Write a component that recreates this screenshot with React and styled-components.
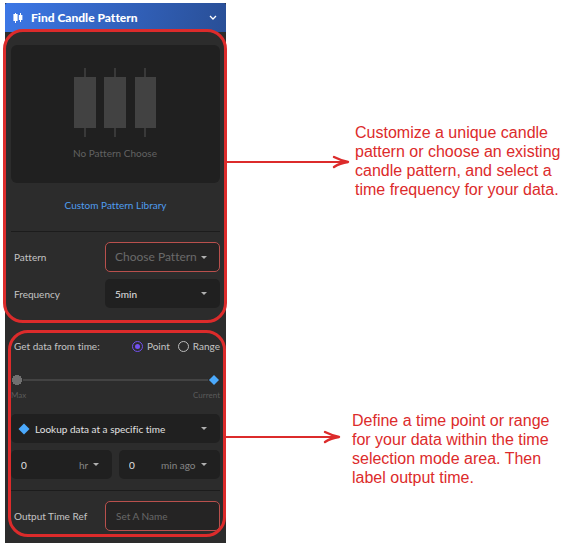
import React, { useState } from "react";
import styled, { createGlobalStyle } from "styled-components";

const GlobalStyle = createGlobalStyle`
  * { box-sizing: border-box; }
  body { margin: 0; background: #fff; font-family: Lato, sans-serif; font-variant-ligatures: none; }
  button, input, select { font: inherit; font-variant-ligatures: none; color: inherit; margin: 0; }
`;

const Page = styled.main`
  display: flex;
  align-items: flex-start;
  padding: 3px 5px 4px;
`;

const Panel = styled.form`
  flex: 0 0 221px;
  background: #2c2c2c;
  color: #c4c4c4;
  font-size: 10px;
  line-height: 14px;
`;

const Header = styled.button`
  display: flex;
  align-items: center;
  gap: 8px;
  width: 100%;
  height: 29px;
  padding: 0 9px 0 8px;
  border: 0;
  border-radius: 2px 2px 0 0;
  background: linear-gradient(100deg, #3c77e6, #294f97);
  color: #fff;
  font-size: 12px;
  font-weight: 900;
  text-align: left;
`;

const Title = styled.span`
  flex: 1;
`;

const Section = styled.section`
  position: relative;
  padding: ${(p) => p.$padding};
`;

const Highlight = styled.div`
  position: absolute;
  inset: ${(p) => p.$inset};
  border: 3px solid #dc2b2b;
  border-radius: 20px;
  pointer-events: none;
`;

const Preview = styled.div`
  display: flex;
  flex-direction: column;
  align-items: center;
  gap: 9px;
  height: 138px;
  padding-top: 23px;
  padding-right: 1px;
  border-radius: 6px;
  background: #202020;
  color: #626262;
`;

const LibraryLink = styled.a`
  display: block;
  margin: 15px 0 19px;
  color: #4f9df0;
  text-align: center;
  text-decoration: none;
`;

const Divider = styled.hr`
  height: 1px;
  margin: 0 0 10px;
  border: 0;
  background: #1c1c1c;
`;

const Row = styled.div`
  display: grid;
  grid-template-columns: 1fr 115px;
  align-items: center;
  padding-left: 3px;
  margin-bottom: ${(p) => p.$below || 0}px;
`;

const Field = styled.div`
  position: relative;
  display: flex;
  align-items: center;
  height: ${(p) => (p.$required ? 30 : 29)}px;
  border: ${(p) => (p.$required ? "1px solid #b9504d" : "0")};
  border-radius: 5px;
  background: ${(p) => (p.$required ? "#252424" : "#202020")};
  svg { pointer-events: none; }
`;

const Caret = styled.svg`
  position: absolute;
  right: ${(p) => p.$right || 13}px;
  width: 6px;
  height: 3px;
  fill: #b0b0b0;
`;

const Select = styled.select`
  appearance: none;
  width: 100%;
  height: 100%;
  padding: 0 20px 0 ${(p) => p.$left || 10}px;
  border: 0;
  outline: 0;
  background: transparent;
  color: ${(p) => (p.$muted ? "#6a6a6a" : "#e2e2e2")};
  font-size: ${(p) => p.$size || 10}px;
`;

const UnitSelect = styled(Select)`
  flex: none;
  width: ${(p) => p.$width}px;
  padding: 0;
  color: #858585;
`;

const TextInput = styled.input`
  flex: 1;
  min-width: 0;
  width: 100%;
  height: 100%;
  padding: 0 0 0 10px;
  border: 0;
  outline: 0;
  background: transparent;
  color: #e2e2e2;
  &::placeholder { color: #686868; opacity: 1; }
`;

const ModeRow = styled.fieldset`
  display: flex;
  align-items: center;
  gap: 8px;
  padding: 0 0 0 3px;
  margin: 0;
  border: 0;
`;

const ModeTitle = styled.span`
  flex: 1;
`;

const RadioLabel = styled.label`
  display: flex;
  align-items: center;
  gap: 4px;
`;

const Radio = styled.input`
  appearance: none;
  display: grid;
  place-items: center;
  width: 11px;
  height: 11px;
  border: 1px solid #bcbcbc;
  border-radius: 50%;
  &:checked {
    border-color: #7351ef;
  }
  &:checked::before {
    content: "";
    width: 5px;
    height: 5px;
    border-radius: 50%;
    background: #7351ef;
  }
`;

const Slider = styled.input`
  appearance: none;
  display: block;
  width: 100%;
  height: 12px;
  margin: 21px 0 3px;
  background:
    radial-gradient(circle at 6px 6px, #707070 0 5px, transparent 5px),
    linear-gradient(#434343, #434343) 12px 5px / calc(100% - 24px) 2px no-repeat;
  &::-webkit-slider-thumb {
    appearance: none;
    width: 12px;
    height: 12px;
    background: #4ba9fc;
    clip-path: polygon(50% 8%, 92% 50%, 50% 92%, 8% 50%);
  }
`;

const Scale = styled.div`
  display: flex;
  justify-content: space-between;
  color: #5b5b5b;
  font-size: 8px;
  line-height: 12px;
  margin-bottom: 13px;
`;

const Diamond = styled.svg`
  position: absolute;
  left: 7px;
  width: 12px;
  height: 12px;
  fill: #4ba9fc;
`;

const Offset = styled.div`
  display: grid;
  grid-template-columns: 1fr 1fr;
  gap: 7px;
  margin: 7px 0 11px;
`;

const Notes = styled.aside`
  flex: 1;
  display: flex;
  flex-direction: column;
  gap: 212px;
  padding-top: 120px;
  color: #dc2b2b;
  font: 16px/19px "Liberation Sans", Arial, sans-serif;
`;

const Note = styled.div`
  display: flex;
  align-items: flex-start;
  gap: ${(p) => p.$gap}px;
`;

const NoteText = styled.p`
  flex: 1;
  max-width: 212px;
  margin: 0;
`;

const ArrowSvg = styled.svg`
  flex: none;
  margin-top: ${(p) => p.$top}px;
  fill: none;
  stroke: currentColor;
  stroke-linecap: round;
  stroke-linejoin: round;
`;

const DownCaret = ({ right }) => (
  <Caret $right={right} viewBox="0 0 6 3" aria-hidden="true"><path d="M0 0h6L3 3z" /></Caret>
);

const HeaderCandles = () => (
  <svg width="10" height="12" viewBox="0 0 10 12" fill="#fff" aria-hidden="true">
    <path d="M2 1h1v1h1.6v7H3v2H2V9H.4V2H2zM7 1h1v2h1.4v5H8v2H7V8H5.8V3H7z" />
  </svg>
);

const Candles = () => (
  <svg width="82" height="69" viewBox="0 0 82 69" aria-hidden="true">
    <path d="M11 0v69M41 0v69M71 0v69" stroke="#393939" strokeWidth="2" />
    <path d="M0 9h22v51H0zM30 9h22v51H30zM61 9h21v51H61z" fill="#424242" />
  </svg>
);

const Arrow = ({ width, top }) => (
  <ArrowSvg $top={top} width={width} height="14" viewBox={`0 0 ${width} 14`} aria-hidden="true">
    <path d={`M0 7H${width - 3}`} strokeWidth="2" />
    <path d={`M${width - 16} 2Q${width - 10} 5 ${width - 2} 7Q${width - 10} 8 ${width - 16} 12`} strokeWidth="2.4" />
  </ArrowSvg>
);

export default function App() {
  const [mode, setMode] = useState("point");
  return (
    <>
      <GlobalStyle />
      <Page>
        <Panel>
          <Header type="button">
            <HeaderCandles />
            <Title>Find Candle Pattern</Title>
            <svg width="8" height="6" viewBox="0 0 8 6" fill="none" stroke="#fff" strokeWidth="1.3" aria-hidden="true">
              <path d="M1 1l3 3 3-3" />
            </svg>
          </Header>
          <Section $padding="13px 6px 18px">
            <Preview>
              <Candles />
              <span>No Pattern Choose</span>
            </Preview>
            <LibraryLink href="#library">Custom Pattern Library</LibraryLink>
            <Divider />
            <Row $below={7}>
              <label htmlFor="pattern">Pattern</label>
              <Field $required>
                <Select id="pattern" $muted $size={12} $left={9}><option>Choose Pattern</option></Select>
                <DownCaret right={12} />
              </Field>
            </Row>
            <Row>
              <label htmlFor="frequency">Frequency</label>
              <Field>
                <Select id="frequency"><option>5min</option></Select>
                <DownCaret />
              </Field>
            </Row>
            <Highlight $inset="-3px -1px 3px -2px" />
          </Section>
          <Section $padding="13px 6px 12px">
            <ModeRow aria-label="Get data from time">
              <ModeTitle>Get data from time:</ModeTitle>
              <RadioLabel>
                <Radio type="radio" name="mode" checked={mode === "point"} onChange={() => setMode("point")} />
                Point
              </RadioLabel>
              <RadioLabel>
                <Radio type="radio" name="mode" checked={mode === "range"} onChange={() => setMode("range")} />
                Range
              </RadioLabel>
            </ModeRow>
            <Slider type="range" min="0" max="100" defaultValue="100" aria-label="Time" />
            <Scale><span>Max</span><span>Current</span></Scale>
            <Field>
              <Diamond viewBox="0 0 12 12" aria-hidden="true"><path d="M6 .5 11.5 6 6 11.5.5 6z" /></Diamond>
              <Select aria-label="Lookup mode" $left={24}><option>Lookup data at a specific time</option></Select>
              <DownCaret />
            </Field>
            <Offset>
              <Field>
                <TextInput aria-label="Hours" defaultValue="0" />
                <UnitSelect aria-label="Hour unit" $width={33}><option>hr</option></UnitSelect>
                <DownCaret />
              </Field>
              <Field>
                <TextInput aria-label="Minutes" defaultValue="0" />
                <UnitSelect aria-label="Minute unit" $width={59}><option>min ago</option></UnitSelect>
                <DownCaret />
              </Field>
            </Offset>
            <Divider />
            <Row>
              <label htmlFor="output">Output Time Ref</label>
              <Field $required><TextInput id="output" placeholder="Set A Name" /></Field>
            </Row>
            <Highlight $inset="4px 0 6px 3px" />
          </Section>
        </Panel>
        <Notes>
          <Note $gap={5}>
            <Arrow width={124} top={32} />
            <NoteText>Customize a unique candle pattern or choose an existing candle pattern, and select a time frequency for your data.</NoteText>
          </Note>
          <Note $gap={11}>
            <Arrow width={115} top={19} />
            <NoteText>Define a time point or range for your data within the time selection mode area. Then label output time.</NoteText>
          </Note>
        </Notes>
      </Page>
    </>
  );
}
